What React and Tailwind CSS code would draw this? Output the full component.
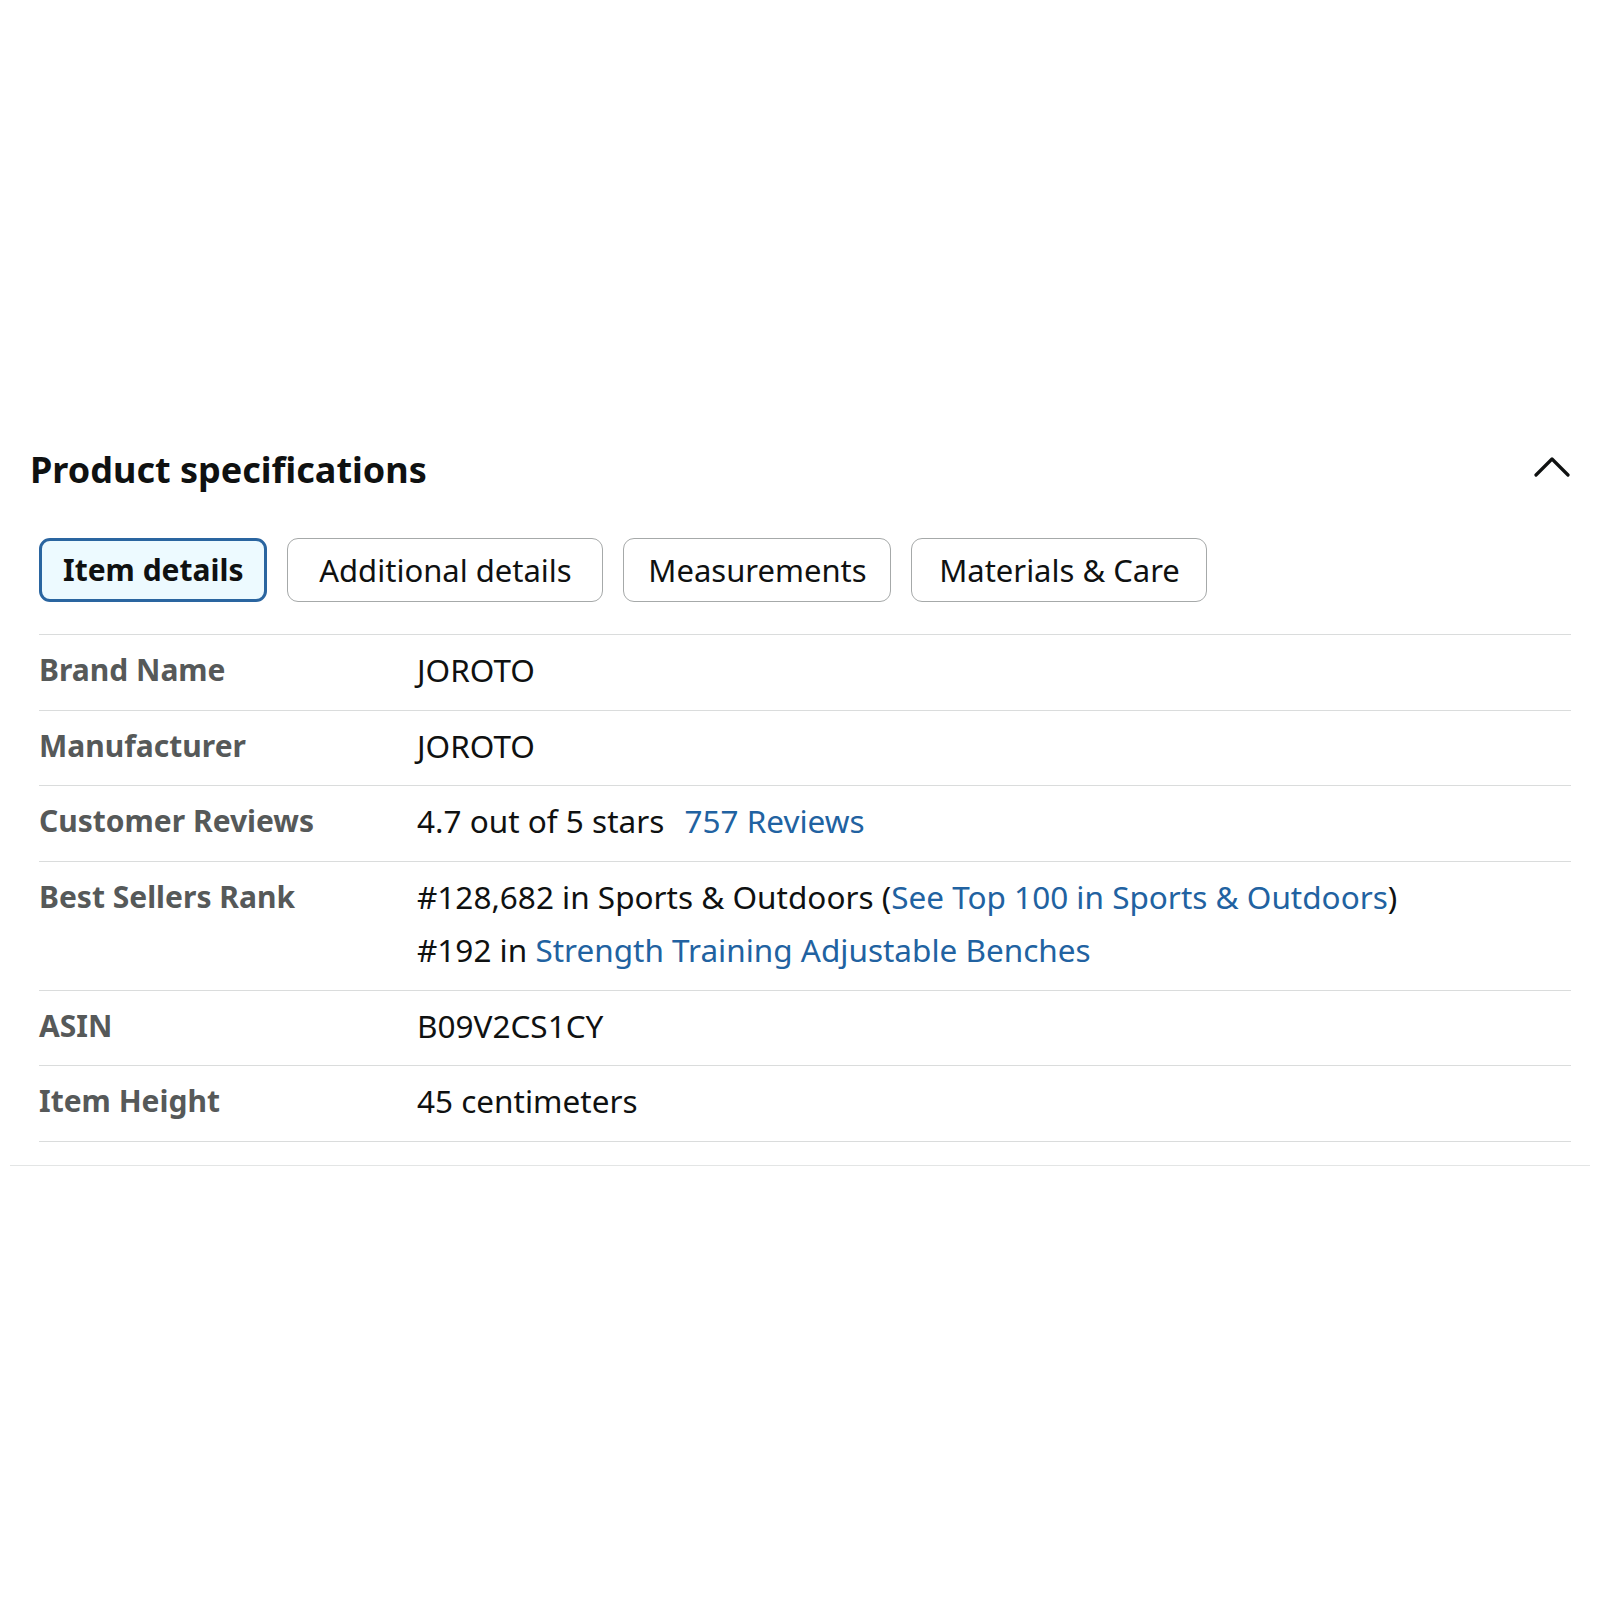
import React from "react";

const font = { fontFamily: '"Noto Sans", "Open Sans", Arial, sans-serif' };

function Row({ label, children }) {
  return (
    <div className="flex border-b border-[#dadcdc] pt-[17px] pb-[21px]">
      <div className="w-[378px] shrink-0 text-[30px] leading-[36.5px] font-bold text-[#565959]">{label}</div>
      <div className="flex-1 text-[31.5px] leading-[36.5px] text-[#0f1111]">{children}</div>
    </div>
  );
}

export default function App() {
  const tabs = [
    { t: "Additional details", w: "w-[316px]" },
    { t: "Measurements", w: "w-[268px]" },
    { t: "Materials & Care", w: "w-[296px]" },
  ];
  return (
    <div className="w-[1600px] h-[1600px] bg-white pt-[448px]" style={font}>
      <div className="flex items-center justify-between pl-[30px] pr-[30px] h-[44px]">
        <h2 className="text-[36px] leading-[44px] font-bold text-[#0f1111]">Product specifications</h2>
        <svg width="36" height="22" viewBox="0 0 36 22" className="mt-[-6px]">
          <polyline points="2,19 18,3 34,19" fill="none" stroke="#0f1111" strokeWidth="3.2" strokeLinecap="round" strokeLinejoin="round" />
        </svg>
      </div>
      <div className="flex gap-[20px] pl-[39px] mt-[46px]">
        <div className="border-[3px] border-[#2a65a0] bg-[#edfaff] rounded-[11px] px-[21px] py-[11px] text-[30px] leading-[36px] font-bold text-[#0f1111]">
          Item details
        </div>
        {tabs.map(({ t, w }) => (
          <div key={t} className={`${w} text-center whitespace-nowrap border border-[#a6a9a9] rounded-[11px] py-[13px] text-[31px] leading-[36px] text-[#0f1111]`}>
            {t}
          </div>
        ))}
      </div>
      <div className="ml-[39px] w-[1532px] mt-[32px] border-t border-[#dadcdc]">
        <Row label="Brand Name">JOROTO</Row>
        <Row label="Manufacturer">JOROTO</Row>
        <Row label="Customer Reviews">
          4.7 out of 5 stars <span className="ml-[12px] text-[#2162a1]">757 Reviews</span>
        </Row>
        <Row label="Best Sellers Rank">
          <div>
            #128,682 in Sports &amp; Outdoors (<span className="text-[#2162a1]">See Top 100 in Sports &amp; Outdoors</span>)
          </div>
          <div className="mt-[17px]">
            #192 in <span className="text-[#2162a1]">Strength Training Adjustable Benches</span>
          </div>
        </Row>
        <Row label="ASIN">B09V2CS1CY</Row>
        <Row label="Item Height">45 centimeters</Row>
      </div>
      <div className="mx-[10px] mt-[23px] border-t border-[#e3e5e5]" />
    </div>
  );
}
